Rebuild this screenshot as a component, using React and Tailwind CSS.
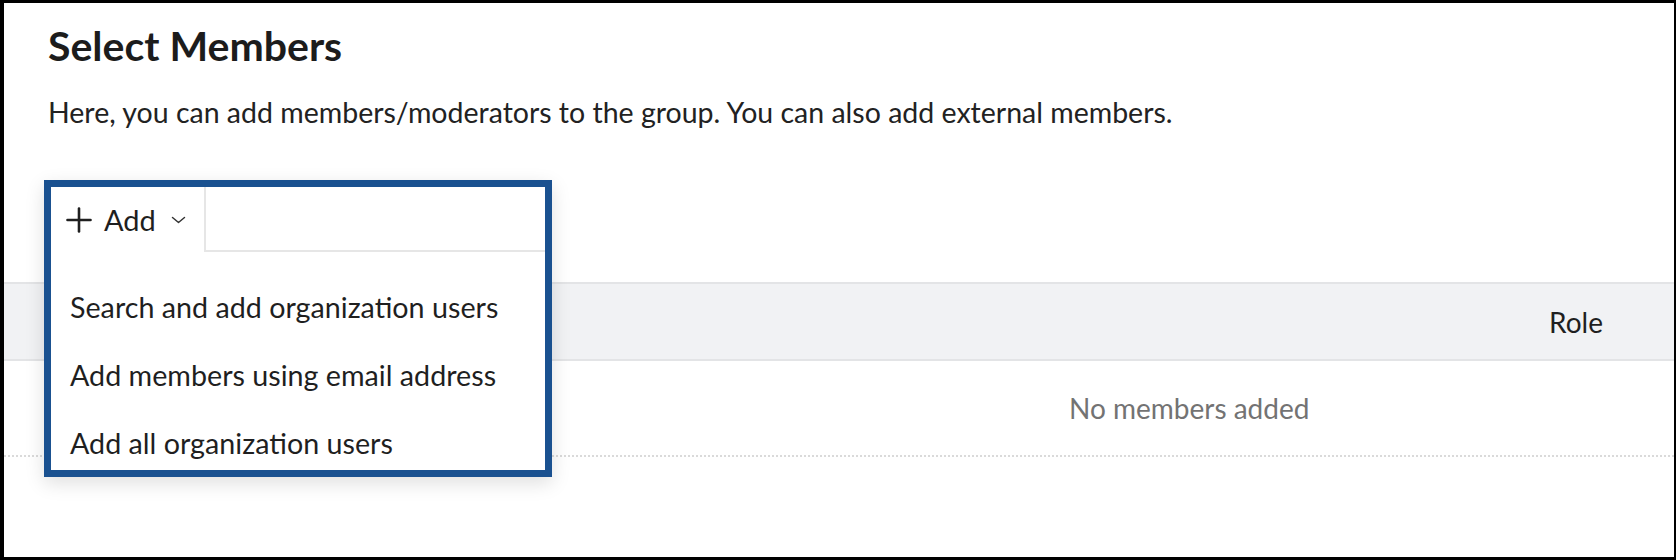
import React from "react";

function PlusIcon() {
  return (
    <svg width="26" height="26" viewBox="0 0 26 26" fill="none" stroke="#1f1f1f" strokeWidth="2.6" strokeLinecap="round">
      <line x1="13" y1="1.5" x2="13" y2="24.5" />
      <line x1="1.5" y1="13" x2="24.5" y2="13" />
    </svg>
  );
}

function ChevronIcon() {
  return (
    <svg width="15" height="8" viewBox="0 0 15 8" fill="none" stroke="#333" strokeWidth="1.5" strokeLinecap="round" strokeLinejoin="round">
      <polyline points="1.5,1.5 7.5,6.5 13.5,1.5" />
    </svg>
  );
}

export default function App() {
  return (
    <div
      className="w-[1676px] h-[560px] bg-white border-t-[3px] border-l-[4px] border-r-[2px] border-b-[3px] border-black overflow-hidden"
      style={{ fontFamily: "Lato, 'Noto Sans', sans-serif" }}
    >
      <div className="px-[44px] pt-[18px]">
        <h1 className="text-[41px] leading-[49px] font-bold text-[#1c1c1c]">Select Members</h1>
        <p className="mt-[25px] text-[28.5px] leading-[34px] text-[#222]">
          Here, you can add members/moderators to the group. You can also add external members.
        </p>
      </div>

      <div className="relative mt-[51px]">
        <div className="h-[102px]" />
        <div className="h-[79px] bg-[#f1f2f4] border-y-2 border-[#e3e4e6] flex items-center justify-end pr-[71px]">
          <span className="text-[28px] text-[#1f1f1f]">Role</span>
        </div>
        <div className="h-[96px] border-b-2 border-dotted border-[#dadada] flex items-center pl-[1065px]">
          <span className="text-[28px] text-[#737373]">No members added</span>
        </div>

        <div className="absolute top-0 left-[40px] w-[508px] bg-white border-[7px] border-[#1a5190] shadow-[0_6px_18px_rgba(0,0,0,0.13)]">
          <div className="flex h-[65px]">
            <div className="w-[153px] flex items-center pl-[15px] bg-white">
              <PlusIcon />
              <span className="ml-[12px] text-[29px] text-[#1f1f1f]">Add</span>
              <span className="ml-[15px] flex items-center">
                <ChevronIcon />
              </span>
            </div>
            <div className="flex-1 border-l-2 border-b-2 border-[#e6e6e6]" />
          </div>
          <div className="flex flex-col gap-[20px] pt-[32px] pb-[2px] pl-[19px]">
            <div className="h-[48px] flex items-center text-[28.7px] text-[#1f1f1f]">Search and add organization users</div>
            <div className="h-[48px] flex items-center text-[28.7px] text-[#1f1f1f]">Add members using email address</div>
            <div className="h-[48px] flex items-center text-[28.7px] text-[#1f1f1f]">Add all organization users</div>
          </div>
        </div>
      </div>
    </div>
  );
}
